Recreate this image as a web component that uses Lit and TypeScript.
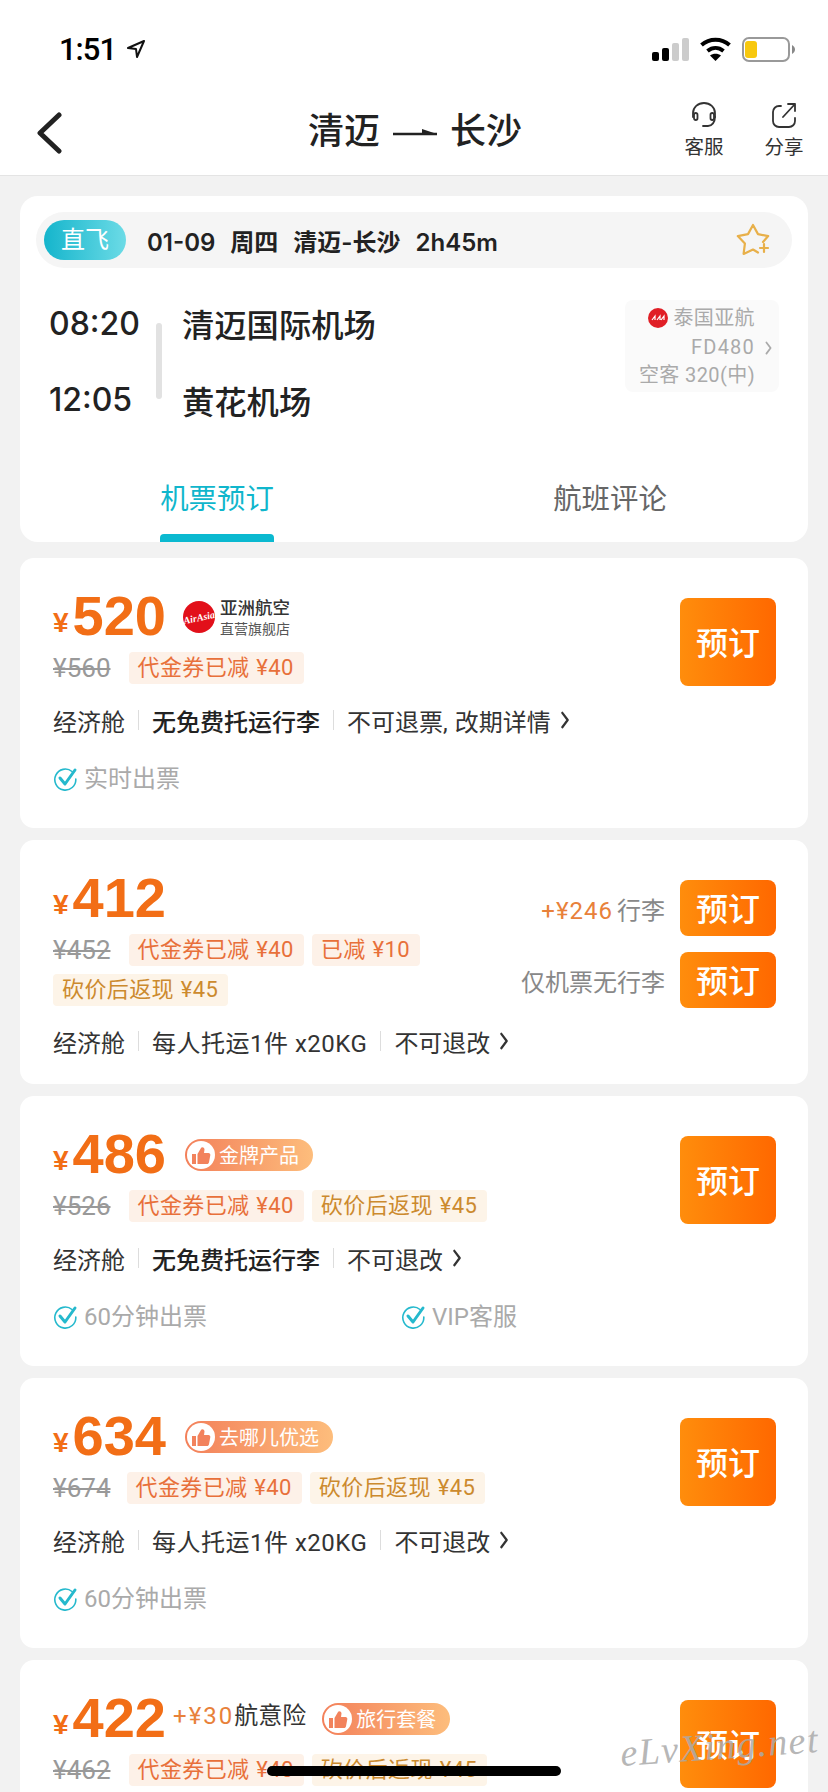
import { LitElement, html, css, svg, TemplateResult } from 'lit';
import { customElement } from 'lit/decorators.js';

type Tag = { text: string; gold?: boolean };
type Fare = {
  price: string;
  old: string;
  tight?: boolean;
  tags: Tag[];
  baggage: string;
  baggageBold?: boolean;
  rule: string | TemplateResult;
  checks?: string[];
  chip?: string;
  airline?: boolean;
  extra?: boolean;
  baggageOptions?: boolean;
};

const voucher: Tag = { text: '代金券已减 ¥40' };
const cashback: Tag = { text: '砍价后返现 ¥45', gold: true };

const fares: Fare[] = [
  { price: '520', old: '¥560', tags: [voucher], baggage: '无免费托运行李', baggageBold: true, rule: html`不可退票<span class="comma">,</span>改期详情`, checks: ['实时出票'], airline: true },
  { price: '412', old: '¥452', tags: [voucher, { text: '已减 ¥10' }, cashback], baggage: '每人托运1件 x20KG', rule: '不可退改', baggageOptions: true },
  { price: '486', old: '¥526', tags: [voucher, cashback], baggage: '无免费托运行李', baggageBold: true, rule: '不可退改', checks: ['60分钟出票', 'VIP客服'], chip: '金牌产品' },
  { price: '634', old: '¥674', tight: true, tags: [voucher, cashback], baggage: '每人托运1件 x20KG', rule: '不可退改', checks: ['60分钟出票'], chip: '去哪儿优选' },
  { price: '422', old: '¥462', tags: [voucher, cashback], baggage: '', rule: '', chip: '旅行套餐', extra: true },
];

const chevron = svg`<path d="M2 2l6 8-6 8" fill="none" stroke="currentColor" stroke-width="2.500" stroke-linecap="round" stroke-linejoin="round"/>`;

@customElement('app-root')
export class AppRoot extends LitElement {
  static styles = css`
    :host {
      display: block;
      position: relative;
      width: 828px;
      height: 1792px;
      overflow: hidden;
      background: #f2f2f2;
      color: #222;
      font-family: Roboto, 'Noto Sans CJK SC', sans-serif;
    }
    svg { display: block; flex: none; }

    .top { background: #fff; height: 175px; border-bottom: 1px solid #e4e4e4; }
    .status { display: flex; align-items: center; height: 98px; padding: 0 32px 0 59px; }
    .clock { font-size: 31px; font-weight: 500; color: #000; letter-spacing: -1px; }
    .arrow { margin-left: 10px; }
    .status-right { margin-left: auto; display: flex; align-items: center; gap: 11px; }
    .nav { position: relative; display: flex; align-items: center; height: 77px; padding-left: 36px; }
    .back { margin-bottom: 8px; }
    .title {
      position: absolute; left: 308px; top: 10px;
      display: flex; align-items: center; gap: 13px;
      font-size: 36px; font-weight: 500; line-height: 48px; color: #222;
    }
    .nav-actions { margin-left: auto; display: flex; gap: 42px; padding-right: 25px; }
    .nav-action { display: flex; flex-direction: column; align-items: center; width: 38px; font-size: 19.500px; line-height: 24px; color: #333; gap: 8px; margin-top: -12px; white-space: nowrap; }

    .list { display: flex; flex-direction: column; gap: 12px; padding: 20px 20px 0; }
    .card { background: #fff; border-radius: 14px; }

    .head { height: 346px; box-sizing: border-box; padding: 16px 16px 0; display: flex; flex-direction: column; border-radius: 18px; margin-bottom: 4px; }
    .pill { display: flex; align-items: center; height: 56px; border-radius: 28px; background: #f5f5f5; padding: 0 22px 0 8px; }
    .direct {
      width: 82px; height: 40px; border-radius: 20px;
      background: linear-gradient(90deg, #15b5cc, #6cdbe6);
      color: #fff; font-size: 24px; line-height: 40px; text-align: center;
    }
    .pill-text { margin-left: 21px; font-family: Inter, 'Noto Sans CJK SC', sans-serif; font-size: 24px; font-weight: 600; display: flex; align-items: baseline; gap: 15px; color: #222; }
    .star { margin-left: auto; }

    .flight { position: relative; display: grid; grid-template-columns: 107px 26px 1fr; margin: 32px 0 0 13px; height: 160px; }
    .times { display: flex; flex-direction: column; gap: 38px; font-family: Inter, sans-serif; font-size: 32px; font-weight: 500; line-height: 38px; padding-top: 5px; }
    .bar { width: 6px; height: 76px; background: #e2e2e2; border-radius: 3px; margin-top: 23px; }
    .ports { display: flex; flex-direction: column; gap: 32px; font-size: 32.300px; font-weight: 500; line-height: 45px; padding-top: 4px; }
    .plane {
      position: absolute; right: 13px; top: 0;
      box-sizing: border-box; width: 154px; height: 92px; padding: 4px 6px 0 0;
      background: #fafafa; border-radius: 8px; color: #aaa; font-size: 20px; line-height: 28.500px; letter-spacing: .4px;
      display: flex; flex-direction: column; align-items: flex-end;
    }
    .plane div { display: flex; align-items: center; padding-right: 18px; position: relative; }
    .plane .code { letter-spacing: 1.200px; }
    .plane .more { position: absolute; right: 0; top: 8px; color: #aaa; }
    .mini-logo { margin-right: 5px; }

    .tabs { display: grid; grid-template-columns: 344px 1fr; margin-top: 20px; font-size: 28.400px; line-height: 40px; color: #666; white-space: nowrap; }
    .tab { display: flex; flex-direction: column; align-items: center; width: 114px; margin-left: 124px; }
    .tab.on { color: #10b6cc; }
    .tab.on::after { content: ''; width: 114px; height: 8px; margin-top: 14px; background: #0bb9d0; border-radius: 4px 4px 0 0; }
    .tab.off { margin-left: 173px; }

    .fare { box-sizing: border-box; position: relative; display: flex; padding: 27px 32px 0 33px; height: 270px; }
    .fare.short { height: 244px; }
    .main { flex: 1; min-width: 0; }
    .price-row { display: flex; align-items: center; height: 63px; margin-bottom: 4px; color: #f26e16; font-family: 'Liberation Sans', sans-serif; }
    .yen { font-size: 28px; font-weight: 700; align-self: flex-end; line-height: 30px; margin-bottom: 10px; margin-right: 4px; }
    .price { font-size: 56px; font-weight: 700; line-height: 60px; margin-top: -2px; }
    .old { font-size: 26px; line-height: 32px; color: #999; text-decoration: line-through; margin-right: 10px; }
    .old.tight { margin-right: 8px; }
    .tags { display: flex; flex-wrap: wrap; gap: 8px 8px; align-items: center; width: 450px; }
    .tag { height: 32px; line-height: 32px; padding: 0 10px 0 9px; font-size: 22px; word-spacing: 1px; letter-spacing: .4px; border-radius: 4px; background: #fdf1e8; color: #e8703a; white-space: nowrap; }
    .tag.gold { background: #fdf4e8; color: #cc8a2e; }

    .airline { display: flex; align-items: center; margin-left: 17px; gap: 5px; }
    .airline div { display: flex; flex-direction: column; color: #333; font-family: 'Noto Sans CJK SC', sans-serif; }
    .airline b { font-size: 17.500px; line-height: 20px; font-weight: 500; }
    .airline span { font-size: 14px; line-height: 18px; color: #555; margin-top: 2px; }

    .chip {
      display: flex; align-items: center; height: 32px; margin-left: 19px; padding: 0 14px 0 2px;
      border-radius: 16px; color: #fff; font-size: 20px; line-height: 32px;
      font-family: 'Noto Sans CJK SC', sans-serif;
      background: linear-gradient(90deg, #f3805a, #fdbd7c);
    }
    .addon + .chip { margin-left: 16px; }
    .chip-icon { width: 28px; height: 28px; border-radius: 50%; background: #fff; display: flex; align-items: center; justify-content: center; margin-right: 4px; }
    .addon { display: flex; font-family: Roboto, 'Noto Sans CJK SC', sans-serif; font-size: 24px; line-height: 30px; margin-left: 7px; margin-top: -6px; }
    .addon i { font-style: normal; color: #e8813a; letter-spacing: 2px; }
    .addon span { color: #333; }

    .info { display: flex; align-items: center; height: 32px; margin-top: 20px; font-size: 24px; color: #333; white-space: nowrap; }
    .short .info { margin-top: 19px; }
    .sep { width: 1px; height: 20px; background: #ddd; margin: 0 13px; }
    .heavy { font-weight: 500; color: #222; }
    .plain { letter-spacing: .5px; }
    .comma { padding-right: 7px; }
    .info svg { margin-left: 9px; color: #333; }

    .checks { display: grid; grid-template-columns: 348px 1fr; margin-top: 27px; font-size: 24px; line-height: 32px; color: #aaa; }
    .check { display: flex; align-items: center; gap: 6px; }

    .cta { width: 96px; display: flex; flex-direction: column; gap: 16px; margin-top: 13px; }
    .book {
      display: flex; align-items: center; justify-content: center; box-sizing: border-box; padding-bottom: 3px; height: 88px; border-radius: 8px;
      background: linear-gradient(90deg, #ff8d0c, #ff6800); color: #fff; font-size: 32px; font-weight: 500;
    }
    .book.low { height: 56px; width: 96px; }
    .options { position: relative; display: flex; flex-direction: column; align-items: flex-end; gap: 16px; margin-top: 13px; }
    .option { display: flex; align-items: center; gap: 15px; font-size: 24px; color: #888; white-space: nowrap; }
    .option i { font-style: normal; color: #e8813a; margin-right: 4px; letter-spacing: 1px; }

    .home { position: absolute; left: 267px; top: 1766px; width: 294px; height: 10px; border-radius: 5px; background: #000; }
    .mark {
      position: absolute; left: 620px; top: 1724px; transform: rotate(-4deg);
      font: italic 38px 'Liberation Serif', serif; letter-spacing: 1.500px; color: rgba(170, 170, 170, .85);
      white-space: nowrap;
    }
  `;

  renderStatus() {
    return html`
      <div class="status">
        <span class="clock">1:51</span>
        <svg class="arrow" width="20" height="20" viewBox="0 0 20 20"><path d="M18 2L2 9l8 1 1 8z" fill="none" stroke="#111" stroke-width="2" stroke-linejoin="round"/></svg>
        <div class="status-right">
          <svg width="37" height="23" viewBox="0 0 37 23">
            <rect x="0" y="14" width="7" height="9" rx="2" fill="#000"/>
            <rect x="10" y="10" width="7" height="13" rx="2" fill="#000"/>
            <rect x="20" y="5" width="7" height="18" rx="2" fill="#ccc"/>
            <rect x="30" y="0" width="7" height="23" rx="2" fill="#ccc"/>
          </svg>
          <svg width="31" height="24" viewBox="0 0 31 24" fill="none" stroke="#000" stroke-width="4">
            <path d="M1.500 8c8-7 20-7 28 0"/>
            <path d="M7.500 14c5-4 11-4 16 0"/>
            <path d="M15.500 24l-5.500-5.500c3-2.500 8-2.500 11 0z" fill="#000" stroke="none"/>
          </svg>
          <svg width="54" height="25" viewBox="0 0 54 25">
            <rect x="1" y="1" width="46" height="23" rx="6" fill="#fff" stroke="#999" stroke-width="2"/>
            <rect x="3" y="4" width="12" height="17" rx="3" fill="#f8c80e"/>
            <path d="M50 8c2 1 3 3 3 4.500s-1 3.500-3 4.500z" fill="#888"/>
          </svg>
        </div>
      </div>`;
  }

  renderNav() {
    return html`
      <div class="nav">
        <svg class="back" width="26" height="42" viewBox="0 0 26 42"><path d="M23 3L4 21l19 18" fill="none" stroke="#222" stroke-width="5" stroke-linecap="round" stroke-linejoin="round"/></svg>
        <div class="title">
          <span>清迈</span>
          <svg width="44" height="12" viewBox="0 0 44 12"><path d="M0 8h44" stroke="#222" stroke-width="2.500"/><path d="M29 3l15 5H29z" fill="#222"/></svg>
          <span>长沙</span>
        </div>
        <div class="nav-actions">
          <div class="nav-action">
            <svg width="26" height="26" viewBox="0 0 26 26" fill="none" stroke="#333" stroke-width="1.800" stroke-linecap="round">
              <path d="M2 15V11a11 10 0 0 1 22 0v4"/>
              <path d="M24 15c0 5-3 9-7 9h-5"/>
              <rect x="3" y="11" width="3.500" height="7" rx="1.700"/>
              <rect x="19.500" y="11" width="3.500" height="7" rx="1.700"/>
            </svg>
            <span>客服</span>
          </div>
          <div class="nav-action">
            <svg width="24" height="26" viewBox="0 0 24 26" fill="none" stroke="#333" stroke-width="1.800" stroke-linecap="round" stroke-linejoin="round">
              <path d="M9 4H7a6 6 0 0 0-6 6v9a6 6 0 0 0 6 6h10a6 6 0 0 0 6-6v-3"/>
              <path d="M11 15L23 2M16 2h7v7"/>
            </svg>
            <span>分享</span>
          </div>
        </div>
      </div>`;
  }

  renderHead() {
    return html`
      <div class="card head">
        <div class="pill">
          <div class="direct">直飞</div>
          <div class="pill-text"><span>01-09</span><span>周四</span><span>清迈-长沙</span><span>2h45m</span></div>
          <svg class="star" width="34" height="34" viewBox="0 0 34 34" fill="none" stroke="#e8b04a" stroke-width="2.200" stroke-linejoin="round" stroke-linecap="round">
            <path d="M22 29.500L17 26.500L7.600 30.900L8.900 20.600L1.800 13.100L12 11.100L17 2L22 11.100L32.200 13.100L27 19"/>
            <path d="M24 25h8M28 21v8"/>
          </svg>
        </div>
        <div class="flight">
          <div class="times"><span>08:20</span><span>12:05</span></div>
          <div class="bar"></div>
          <div class="ports"><span>清迈国际机场</span><span>黄花机场</span></div>
          <div class="plane">
            <div><svg class="mini-logo" width="20" height="20" viewBox="0 0 20 20"><circle cx="10" cy="10" r="10" fill="#e01f26"/><path d="M4 12l3-4v4M9 12l3-4v4M13 12l3-4v4" fill="none" stroke="#fff" stroke-width="1.200"/></svg>泰国亚航</div>
            <div><span class="code">FD480</span><svg class="more" width="9" height="14" viewBox="0 0 10 20">${chevron}</svg></div>
            <div>空客 320(中)</div>
          </div>
        </div>
        <div class="tabs">
          <div class="tab on">机票预订</div>
          <div class="tab off">航班评论</div>
        </div>
      </div>`;
  }

  renderThumb() {
    return html`<span class="chip-icon"><svg width="20" height="20" viewBox="0 0 20 20"><path d="M1 9h4v10H1zM6.500 9l3.500-6c.5-1.500 3.500-1 3.500 1.500L13 8h4.500c1.200 0 2 1 1.800 2.200l-1.300 7c-.2 1.100-1 1.800-2 1.800H6.500z" fill="#f2825c"/></svg></span>`;
  }

  renderCheck(text: string) {
    return html`
      <div class="check">
        <svg width="25" height="24" viewBox="0 0 25 24" fill="none" stroke-linecap="round" stroke-linejoin="round">
          <path d="M19 4.500A10.500 10.500 0 1 0 22.800 12" stroke="#25b9cd" stroke-width="1.600"/>
          <path d="M7 11l5 6 10-14" stroke="#25b9cd" stroke-width="3"/>
        </svg>
        <span>${text}</span>
      </div>`;
  }

  renderFare(f: Fare) {
    return html`
      <div class="card fare ${f.baggageOptions ? 'short' : ''}">
        <div class="main">
          <div class="price-row">
            <span class="yen">¥</span><span class="price">${f.price}</span>
            ${f.airline ? html`
              <div class="airline">
                <svg width="32" height="32" viewBox="0 0 32 32"><circle cx="16" cy="16" r="16" fill="#e2101a"/><text x="16" y="20" text-anchor="middle" font-size="10" font-weight="700" font-style="italic" font-family="'Liberation Serif', serif" fill="#fff" transform="rotate(-12 16 16)">AirAsia</text></svg>
                <div><b>亚洲航空</b><span>直营旗舰店</span></div>
              </div>` : ''}
            ${f.extra ? html`<div class="addon"><i>+¥30</i><span>航意险</span></div>` : ''}
            ${f.chip ? html`<div class="chip">${this.renderThumb()}${f.chip}</div>` : ''}
          </div>
          <div class="tags">
            <span class="old ${f.tight ? 'tight' : ''}">${f.old}</span>
            ${f.tags.map(t => html`<span class="tag ${t.gold ? 'gold' : ''}">${t.text}</span>`)}
          </div>
          ${f.baggage ? html`
            <div class="info">
              <span>经济舱</span><i class="sep"></i>
              <span class=${f.baggageBold ? 'heavy' : 'plain'}>${f.baggage}</span><i class="sep"></i>
              <span>${f.rule}</span>
              <svg width="10" height="18" viewBox="0 0 10 20">${chevron}</svg>
            </div>` : ''}
          ${f.checks ? html`<div class="checks">${f.checks.map(c => this.renderCheck(c))}</div>` : ''}
        </div>
        ${f.baggageOptions ? html`
          <div class="options">
            <div class="option"><span><i>+¥246</i>行李</span><div class="book low">预订</div></div>
            <div class="option"><span>仅机票无行李</span><div class="book low">预订</div></div>
          </div>` : html`<div class="cta"><div class="book">预订</div></div>`}
      </div>`;
  }

  render() {
    return html`
      <div class="top">
        ${this.renderStatus()}
        ${this.renderNav()}
      </div>
      <div class="list">
        ${this.renderHead()}
        ${fares.map(f => this.renderFare(f))}
      </div>
      <div class="home"></div>
      <div class="mark">eLvXing.net</div>
    `;
  }
}
